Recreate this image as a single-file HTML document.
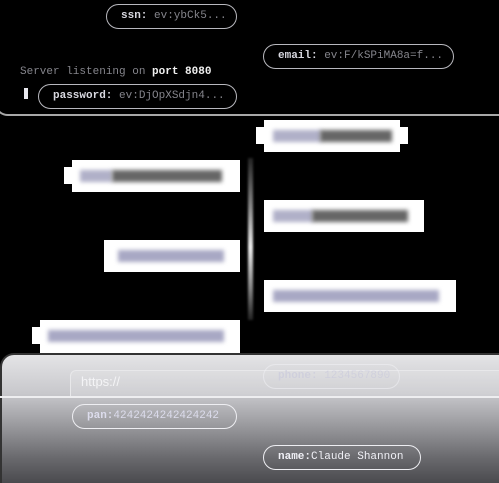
<!DOCTYPE html>
<html><head><style>
*{margin:0;padding:0;box-sizing:border-box}
body{width:499px;height:474px;background:#000;position:relative;overflow:hidden;font-family:"Liberation Mono",monospace}
.top{position:absolute;left:-6px;top:-20px;width:520px;height:136px;background:#000;border:2px solid #a8a8a8;border-radius:0 0 0 14px}
.pill{position:absolute;height:25px;border:1.5px solid #b8b8be;border-radius:13px;font-size:11px;line-height:22px;color:#85858c;padding-left:14px;white-space:nowrap}
.pill b{color:#d8d8e0;font-weight:bold}
.box{position:absolute;background:#fff}
.blur{position:absolute;height:12px;filter:blur(2px)}
.bot{position:absolute;left:0;top:353px;width:520px;height:130px;border-top:2px solid #333;border-left:2px solid #333;border-radius:14px 0 0 0;background:linear-gradient(#e4e4e6 0%,#c8c8cc 30%,#9a9a9e 55%,#6a6a6e 80%,#4a4a4e 100%)}
</style></head><body>
<div class="top"></div>
<div class="pill" style="left:106px;top:4px;width:131px"><b>ssn:</b> ev:ybCk5...</div>
<div class="pill" style="left:263px;top:44px;width:191px"><b>email:</b> ev:F/kSPiMA8a=f...</div>
<div style="position:absolute;left:20px;top:66px;font-size:11px;color:#85858c">Server listening on <b style="color:#f0f0f0">port 8080</b></div>
<div style="position:absolute;left:24px;top:88px;width:4px;height:11px;background:#e8e8ee"></div>
<div class="pill" style="left:38px;top:84px;width:199px"><b>password:</b> ev:DjOpXSdjn4...</div>

<div class="box" style="left:264px;top:120px;width:136px;height:32px"></div><div class="box" style="left:256px;top:127px;width:152px;height:17px"></div>
<div class="blur" style="left:273px;top:130px;width:48px;background:#b0b0c8"></div><div class="blur" style="left:320px;top:130px;width:72px;background:#666"></div>

<div class="box" style="left:72px;top:160px;width:168px;height:32px"></div><div class="box" style="left:64px;top:167px;width:176px;height:17px"></div>
<div class="blur" style="left:80px;top:170px;width:32px;background:#b0b0c8"></div><div class="blur" style="left:112px;top:170px;width:110px;background:#666"></div>

<div class="box" style="left:264px;top:200px;width:160px;height:32px"></div>
<div class="blur" style="left:273px;top:210px;width:40px;background:#b0b0c8"></div><div class="blur" style="left:312px;top:210px;width:96px;background:#666"></div>

<div class="box" style="left:104px;top:240px;width:136px;height:32px"></div>
<div class="blur" style="left:118px;top:250px;width:106px;background:#a8a8c4"></div>

<div class="box" style="left:264px;top:280px;width:192px;height:32px"></div>
<div class="blur" style="left:273px;top:290px;width:166px;background:#a8a8c4"></div>

<div class="box" style="left:40px;top:320px;width:200px;height:34px"></div><div class="box" style="left:32px;top:327px;width:208px;height:17px"></div>
<div class="blur" style="left:48px;top:330px;width:176px;background:#a8a8c4"></div>

<div style="position:absolute;left:248px;top:158px;width:5px;height:162px;background:linear-gradient(#222,#888 30%,#eee 55%,#888 80%,#222);filter:blur(1px)"></div>

<div class="bot"></div>
<div style="position:absolute;left:70px;top:370px;width:440px;height:28px;border:1px solid #e8e8ea;border-bottom:none;border-radius:6px 0 0 0;background:rgba(255,255,255,.15)"></div>
<div style="position:absolute;left:81px;top:374px;font-family:'Liberation Sans',sans-serif;font-size:13px;color:#f4f4f6">https://</div>
<div style="position:absolute;left:0;top:396px;width:499px;height:2px;background:#eeeef0"></div>
<div class="pill" style="left:263px;top:364px;width:137px;border-color:#f0f0f4;color:#c8c8dc;opacity:.6"><b style="color:#c8c8dc">phone:</b> 1234567890</div>
<div class="pill" style="left:72px;top:404px;width:165px;border-color:#eeeef2;color:#dcdcec"><b style="color:#dcdcec">pan:</b>4242424242424242</div>
<div class="pill" style="left:263px;top:445px;width:158px;border-color:#eeeef2;color:#f0f0f6"><b style="color:#f0f0f6">name:</b>Claude Shannon</div>
</body></html>
